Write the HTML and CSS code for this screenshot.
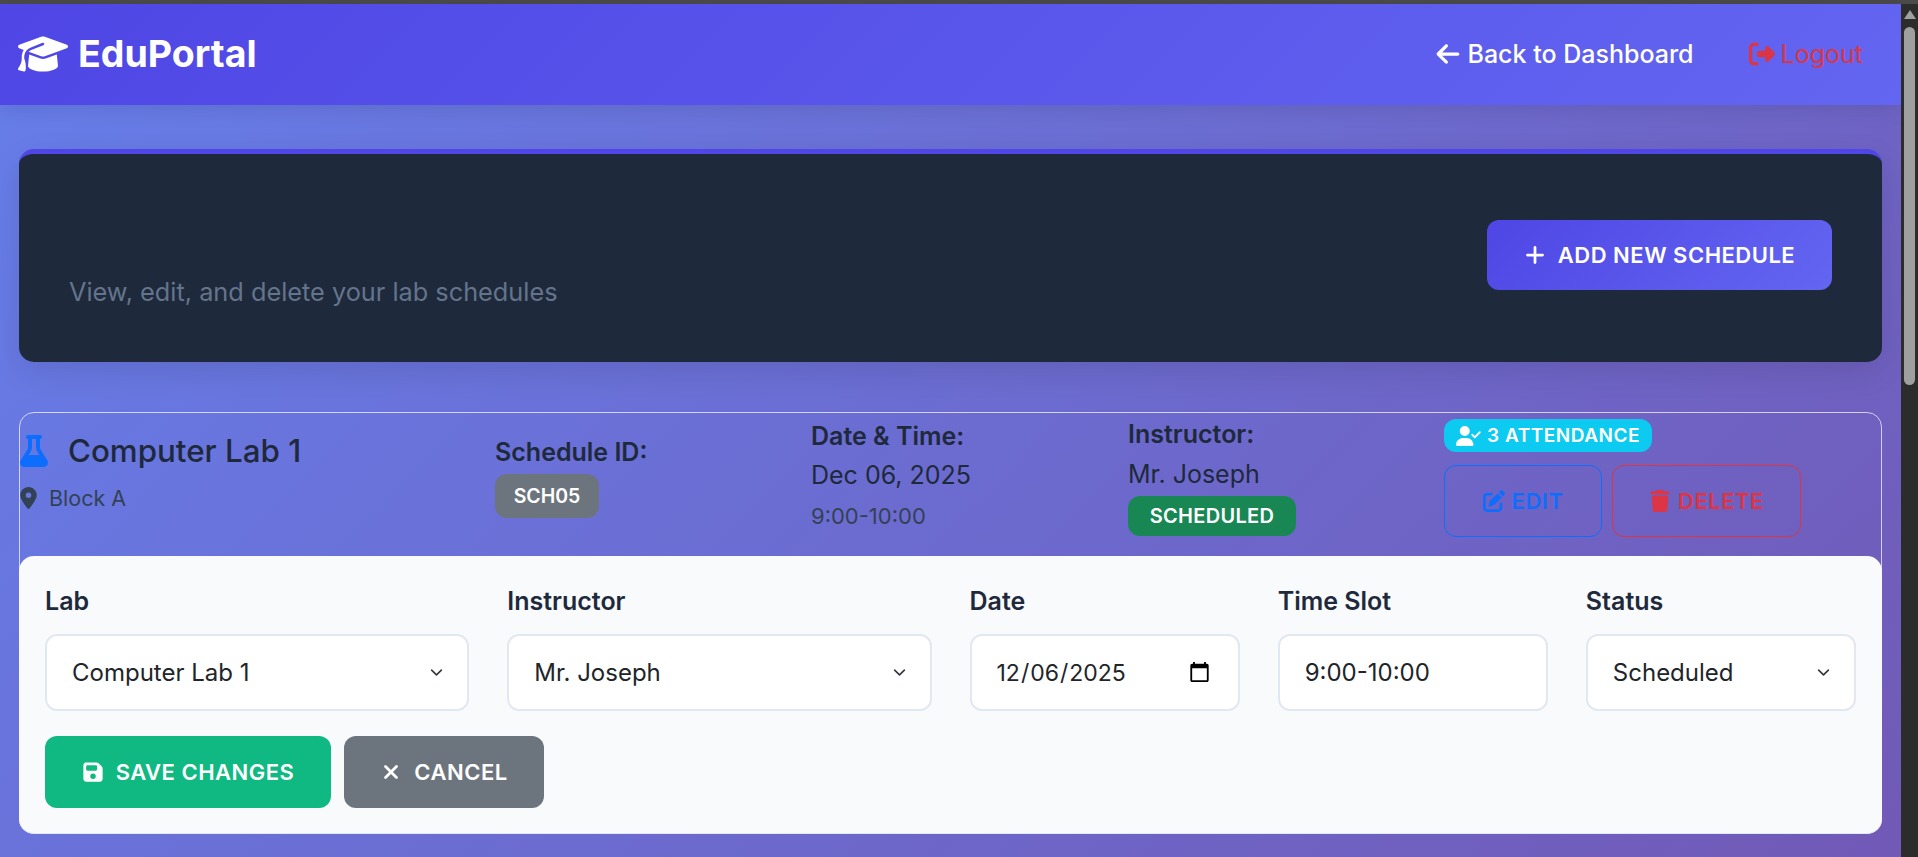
FILE: index.html
```html
<!DOCTYPE html>
<html lang="en">
<head>
    <meta charset="UTF-8">
    <meta name="viewport" content="width=device-width, initial-scale=1.0">
    <title>Lab Schedules</title>
    <link rel="stylesheet" href="styles.css">
</head>
<body>
    <div class="top-strip"></div>
    <div class="window">
        <div class="page">
            <nav class="navbar">
                <a class="brand" href="#">
                    <svg class="brand-icon" viewBox="0 0 640 512"><path d="M320 32c-8.1 0-16.1 1.4-23.7 4.1L15.8 137.4C6.3 140.9 0 149.9 0 160s6.3 19.1 15.8 22.6l57.9 20.9C57.3 229.3 48 259.8 48 291.9v28.1c0 28.4-10.8 57.7-22.3 80.8c-6.5 13-13.9 25.8-22.5 37.6C0 442.7-.9 448.3 .9 453.4s6 8.9 11.2 10.2l64 16c4.2 1.1 8.7 .3 12.4-2s6.3-6.1 7.1-10.4c8.6-42.8 4.3-81.2-2.1-108.7C90.3 344.3 86 329.8 80 316.5V291.9c0-30.2 10.2-58.7 27.9-81.5c12.9-15.5 29.6-28 49.2-35.7l157-61.7c8.2-3.2 17.5 .8 20.7 9s-.8 17.5-9 20.7l-157 61.7c-12.4 4.9-23.3 12.4-32.2 21.6l159.6 57.6c7.6 2.7 15.6 4.1 23.7 4.1s16.1-1.4 23.7-4.1L624.2 182.6c9.5-3.4 15.8-12.5 15.8-22.6s-6.3-19.1-15.8-22.6L343.7 36.1C336.1 33.4 328.1 32 320 32zM128 408c0 35.3 86 72 192 72s192-36.7 192-72L496.7 262.6 354.5 314c-11.1 4-22.8 6-34.5 6s-23.5-2-34.5-6L143.3 262.6 128 408z"/></svg>
                    EduPortal
                </a>
                <div class="nav-links">
                    <a class="nav-link" href="#">
                        <svg class="nav-icon" viewBox="0 0 448 512"><path d="M9.4 233.4c-12.5 12.5-12.5 32.8 0 45.3l160 160c12.5 12.5 32.8 12.5 45.3 0s12.5-32.8 0-45.3L109.2 288 416 288c17.7 0 32-14.3 32-32s-14.3-32-32-32l-306.7 0L214.6 118.6c12.5-12.5 12.5-32.8 0-45.3s-32.8-12.5-45.3 0l-160 160z"/></svg>
                        Back to Dashboard
                    </a>
                    <a class="nav-link logout" href="#">
                        <svg class="nav-icon" viewBox="0 0 512 512"><path d="M377.9 105.9L500.7 228.7c7.2 7.2 11.3 17.1 11.3 27.3s-4.1 20.1-11.3 27.3L377.9 406.1c-6.4 6.4-15 9.9-24 9.9c-18.7 0-33.9-15.2-33.9-33.9l0-62.1-128 0c-17.7 0-32-14.3-32-32l0-64c0-17.7 14.3-32 32-32l128 0 0-62.1c0-18.7 15.2-33.9 33.9-33.9c9 0 17.6 3.6 24 9.9zM160 96L96 96c-17.7 0-32 14.3-32 32l0 256c0 17.7 14.3 32 32 32l64 0c17.7 0 32 14.3 32 32s-14.3 32-32 32l-64 0c-53 0-96-43-96-96L0 128C0 75 43 32 96 32l64 0c17.7 0 32 14.3 32 32s-14.3 32-32 32z"/></svg>
                        Logout
                    </a>
                </div>
            </nav>

            <main class="content">
                <section class="hero">
                    <p class="hero-text">View, edit, and delete your lab schedules</p>
                    <button class="btn btn-add" type="button">
                        <svg class="btn-icon" viewBox="0 0 448 512"><path d="M256 80c0-17.7-14.3-32-32-32s-32 14.3-32 32V224H48c-17.7 0-32 14.3-32 32s14.3 32 32 32H192V432c0 17.7 14.3 32 32 32s32-14.3 32-32V288H400c17.7 0 32-14.3 32-32s-14.3-32-32-32H256V80z"/></svg>
                        Add New Schedule
                    </button>
                </section>

                <section class="schedule-item">
                    <div class="schedule-row">
                        <div class="col-lab">
                            <h3 class="lab-name">
                                <svg class="flask" viewBox="0 0 448 512"><path d="M288 0H160 128C110.3 0 96 14.3 96 32s14.3 32 32 32V196.8c0 11.8-3.3 23.5-9.5 33.5L10.3 406.2C3.6 417.2 0 429.7 0 442.6C0 480.9 31.1 512 69.4 512H378.6c38.3 0 69.4-31.1 69.4-69.4c0-12.8-3.6-25.4-10.3-36.4L329.5 230.4c-6.2-10.1-9.5-21.7-9.5-33.5V64c17.7 0 32-14.3 32-32s-14.3-32-32-32H288zM192 196.8V64h64V196.8c0 23.7 6.6 46.9 19 67.1L309.5 320h-171L173 263.9c12.4-20.2 19-43.4 19-67.1z"/></svg>
                                Computer Lab 1
                            </h3>
                            <p class="lab-block">
                                <svg class="marker" viewBox="0 0 384 512"><path d="M215.7 499.2C267 435 384 279.4 384 192C384 86 298 0 192 0S0 86 0 192c0 87.4 117 243 168.3 307.2c12.3 15.3 35.1 15.3 47.4 0zM192 256a64 64 0 1 1 0-128 64 64 0 1 1 0 128z"/></svg>
                                Block A
                            </p>
                        </div>
                        <div class="col-id">
                            <strong class="field-label">Schedule ID:</strong>
                            <span class="badge badge-id">SCH05</span>
                        </div>
                        <div class="col-date">
                            <strong class="field-label">Date &amp; Time:</strong>
                            <span class="field-value">Dec 06, 2025</span>
                            <small class="field-small">9:00-10:00</small>
                        </div>
                        <div class="col-instructor">
                            <strong class="field-label">Instructor:</strong>
                            <span class="field-value">Mr. Joseph</span>
                            <span class="badge badge-status">SCHEDULED</span>
                        </div>
                        <div class="col-actions">
                            <span class="badge badge-attendance">
                                <svg class="attendance-icon" viewBox="0 0 640 512"><path d="M96 128a128 128 0 1 1 256 0A128 128 0 1 1 96 128zM0 482.3C0 383.8 79.8 304 178.3 304h91.4C368.2 304 448 383.8 448 482.3c0 16.4-13.3 29.7-29.7 29.7H29.7C13.3 512 0 498.7 0 482.3zM625 177L497 305c-9.4 9.4-24.6 9.4-33.9 0l-64-64c-9.4-9.4-9.4-24.6 0-33.9s24.6-9.4 33.9 0l47 47L591 143c9.4-9.4 24.6-9.4 33.9 0s9.4 24.6 0 33.9z"/></svg>
                                3 Attendance
                            </span>
                            <div class="action-btns">
                                <button class="btn btn-edit" type="button">
                                    <svg class="btn-icon" viewBox="0 0 512 512"><path d="M471.6 21.7c-21.9-21.9-57.3-21.9-79.2 0L362.3 51.7l97.9 97.9 30.1-30.1c21.9-21.9 21.9-57.3 0-79.2L471.6 21.7zm-299.2 220c-6.1 6.1-10.8 13.6-13.5 21.9l-29.6 88.8c-2.9 8.6-.6 18.1 5.8 24.6s15.9 8.7 24.6 5.8l88.8-29.6c8.2-2.7 15.7-7.4 21.9-13.5L437.7 172.3 339.7 74.3 172.4 241.7zM96 64C43 64 0 107 0 160V416c0 53 43 96 96 96H352c53 0 96-43 96-96V320c0-17.7-14.3-32-32-32s-32 14.3-32 32v96c0 17.7-14.3 32-32 32H96c-17.7 0-32-14.3-32-32V160c0-17.7 14.3-32 32-32h96c17.7 0 32-14.3 32-32s-14.3-32-32-32H96z"/></svg>
                                    Edit
                                </button>
                                <button class="btn btn-delete" type="button">
                                    <svg class="btn-icon" viewBox="0 0 448 512"><path d="M135.2 17.7L128 32H32C14.3 32 0 46.3 0 64S14.3 96 32 96H416c17.7 0 32-14.3 32-32s-14.3-32-32-32H320l-7.2-14.3C307.4 6.8 296.3 0 284.2 0H163.8c-12.1 0-23.2 6.8-28.6 17.7zM416 128H32L53.2 467c1.6 25.3 22.6 45 47.9 45H346.9c25.3 0 46.3-19.7 47.9-45L416 128z"/></svg>
                                    Delete
                                </button>
                            </div>
                        </div>
                    </div>

                    <form class="edit-form">
                        <div class="form-grid">
                            <div class="field span-3">
                                <label for="lab">Lab</label>
                                <select id="lab" class="control select">
                                    <option>Computer Lab 1</option>
                                </select>
                            </div>
                            <div class="field span-3">
                                <label for="instructor">Instructor</label>
                                <select id="instructor" class="control select">
                                    <option>Mr. Joseph</option>
                                </select>
                            </div>
                            <div class="field span-2">
                                <label for="date">Date</label>
                                <input id="date" class="control control-date" type="date" value="2025-12-06">
                            </div>
                            <div class="field span-2">
                                <label for="slot">Time Slot</label>
                                <input id="slot" class="control" type="text" value="9:00-10:00">
                            </div>
                            <div class="field span-2">
                                <label for="status">Status</label>
                                <select id="status" class="control select">
                                    <option>Scheduled</option>
                                </select>
                            </div>
                        </div>
                        <div class="form-btns">
                            <button class="btn btn-save" type="button">
                                <svg class="btn-icon" viewBox="0 0 448 512"><path d="M64 32C28.7 32 0 60.7 0 96V416c0 35.3 28.7 64 64 64H384c35.3 0 64-28.7 64-64V173.3c0-17-6.7-33.3-18.7-45.3L352 50.7C340 38.7 323.7 32 306.7 32H64zm0 96c0-17.7 14.3-32 32-32H288c17.7 0 32 14.3 32 32v64c0 17.7-14.3 32-32 32H96c-17.7 0-32-14.3-32-32V128zM224 288a64 64 0 1 1 0 128 64 64 0 1 1 0-128z"/></svg>
                                Save Changes
                            </button>
                            <button class="btn btn-cancel" type="button">
                                <svg class="btn-icon" viewBox="0 0 384 512"><path d="M342.6 150.6c12.5-12.5 12.5-32.8 0-45.3s-32.8-12.5-45.3 0L192 210.7 86.6 105.4c-12.5-12.5-32.8-12.5-45.3 0s-12.5 32.8 0 45.3L146.7 256 41.4 361.4c-12.5 12.5-12.5 32.8 0 45.3s32.8 12.5 45.3 0L192 301.3 297.4 406.6c12.5 12.5 32.8 12.5 45.3 0s12.5-32.8 0-45.3L237.3 256 342.6 150.6z"/></svg>
                                Cancel
                            </button>
                        </div>
                    </form>
                </section>
            </main>
        </div>

        <div class="scrollbar">
            <span class="scroll-arrow"></span>
            <span class="scroll-thumb"></span>
        </div>
    </div>
</body>
</html>
```

FILE: styles.css
```css
* {
    box-sizing: border-box;
}
html, body {
    height: 100%;
    margin: 0;
    overflow: hidden;
}
body {
    display: flex;
    flex-direction: column;
    font-family: Inter, "Noto Sans", sans-serif;
    color: #1e293b;
    background: #2c2c2c;
}
a {
    text-decoration: none;
    color: inherit;
}
svg {
    fill: currentColor;
    flex: none;
}

.top-strip {
    height: 4px;
    background: #4b4b4b;
}
.window {
    flex: 1;
    display: flex;
    min-height: 0;
}
.page {
    flex: 1;
    min-width: 0;
    background: linear-gradient(135deg, #667eea 0%, #764ba2 100%) no-repeat;
    background-size: 100% 1950px;
}

/* scrollbar of the window */
.scrollbar {
    width: 17px;
    background: #2c2c2c;
    display: flex;
    flex-direction: column;
    align-items: center;
    padding-top: 6px;
}
.scroll-arrow {
    width: 0;
    height: 0;
    border-left: 6px solid transparent;
    border-right: 6px solid transparent;
    border-bottom: 9px solid #a0a0a0;
}
.scroll-thumb {
    width: 11px;
    height: 358px;
    margin-top: 8px;
    border-radius: 6px;
    background: #9f9f9f;
}

/* navbar */
.navbar {
    height: 101px;
    display: flex;
    align-items: center;
    justify-content: space-between;
    padding: 0 38px 2px 18px;
    background: linear-gradient(135deg, #4f46e5, #6366f1);
    color: #fff;
    box-shadow: 0 4px 20px rgba(0, 0, 0, 0.1);
}
.brand {
    display: flex;
    align-items: center;
    gap: 10px;
    font-size: 37.5px;
    font-weight: 700;
}
.brand-icon {
    width: 50px;
    height: 40px;
}
.nav-links {
    display: flex;
    gap: 55px;
}
.nav-link {
    display: flex;
    align-items: center;
    gap: 6px;
    font-size: 25px;
    font-weight: 500;
}
.nav-icon {
    width: 26px;
    height: 26px;
}
.logout {
    color: #dc3545;
    font-weight: 400;
}

/* main area */
.content {
    padding: 44px 19px 0 19px;
}
.hero {
    height: 213px;
    display: flex;
    align-items: center;
    justify-content: space-between;
    padding: 0 50px;
    background: #1e293b;
    border-top: 5px solid #4f46e5;
    border-radius: 15px;
    box-shadow: 0 10px 30px rgba(0, 0, 0, 0.1);
}
.hero-text {
    margin: 67px 0 0;
    font-size: 25.3px;
    color: #64748b;
}

.btn {
    display: inline-flex;
    align-items: center;
    justify-content: center;
    gap: 12px;
    border: 0;
    border-radius: 12px;
    font-family: inherit;
    font-size: 22px;
    font-weight: 600;
    letter-spacing: 0.5px;
    text-transform: uppercase;
    color: #fff;
    cursor: pointer;
}
.btn-icon {
    width: 22px;
    height: 22px;
}
.btn-add {
    width: 345px;
    height: 70px;
    margin-bottom: 7px;
    background: linear-gradient(135deg, #4f46e5, #6366f1);
}

/* schedule */
.schedule-item {
    margin-top: 50px;
    border: 1px solid rgba(255, 255, 255, 0.7);
    border-radius: 15px;
}
.schedule-row {
    height: 143px;
    display: grid;
    grid-template-columns: 475px 316px 317px 316px 1fr;
    align-items: start;
}
.col-lab {
    padding-top: 19px;
}
.col-id {
    padding-top: 24px;
}
.col-date {
    padding-top: 8px;
}
.col-instructor,
.col-actions {
    padding-top: 6px;
}
.lab-name {
    display: flex;
    align-items: center;
    gap: 20px;
    margin: 0;
    font-size: 31.3px;
    font-weight: 500;
}
.flask {
    width: 28px;
    height: 32px;
    color: #0d6efd;
}
.lab-block {
    display: flex;
    align-items: center;
    gap: 12px;
    margin: 15px 0 0;
    font-size: 21.5px;
    color: #334155;
}
.marker {
    width: 17px;
    height: 22px;
}
.field-label {
    display: block;
    font-size: 25px;
    line-height: 30px;
    font-weight: 600;
}
.field-value {
    display: block;
    margin-top: 9px;
    font-size: 25px;
    line-height: 30px;
}
.col-instructor .field-value {
    margin-top: 10px;
}
.field-small {
    display: block;
    margin-top: 13px;
    font-size: 22px;
    line-height: 27px;
    color: #334155;
}
.badge {
    display: flex;
    align-items: center;
    justify-content: center;
    border-radius: 12px;
    font-weight: 600;
    color: #fff;
}
.badge-id {
    width: 104px;
    height: 44px;
    margin-top: 7px;
    font-size: 19.5px;
    background: #6c757d;
}
.badge-status {
    width: 168px;
    height: 40px;
    margin-top: 7px;
    font-size: 20px;
    letter-spacing: 0.3px;
    background: #198754;
}
.badge-attendance {
    width: 208px;
    height: 33px;
    gap: 6px;
    font-size: 19px;
    letter-spacing: 0.5px;
    text-transform: uppercase;
    background: #0dcaf0;
}
.attendance-icon {
    width: 25px;
    height: 20px;
}
.action-btns {
    display: flex;
    gap: 10px;
    margin-top: 13px;
}
.btn-edit,
.btn-delete {
    height: 72px;
    gap: 7px;
    background: transparent;
    border: 1px solid;
}
.btn-edit {
    width: 158px;
    color: #0d6efd;
}
.btn-delete {
    width: 189px;
    color: #dc3545;
}

/* inline edit form */
.edit-form {
    height: 278px;
    margin: 0 -1px -1px;
    padding: 26px 26px 0;
    background: #f8fafc;
    border-bottom: 1px solid #e2e8f0;
    border-radius: 15px;
}
.form-grid {
    display: grid;
    grid-template-columns: repeat(12, 1fr);
    column-gap: 38px;
}
.span-3 {
    grid-column: span 3;
}
.span-2 {
    grid-column: span 2;
}
.field label {
    display: block;
    margin-bottom: 14px;
    font-size: 25px;
    font-weight: 600;
    line-height: 38px;
}
.control {
    display: block;
    width: 100%;
    height: 77px;
    padding: 0 25px;
    border: 2px solid #e2e8f0;
    border-radius: 12px;
    background-color: #fff;
    font-family: inherit;
    font-size: 24px;
    color: #212529;
    outline: none;
}
.control-date {
    padding-left: 24px;
    font-size: 23px;
}
.select {
    appearance: none;
    background-image: url("data:image/svg+xml,%3Csvg xmlns='http://www.w3.org/2000/svg' viewBox='0 0 16 16'%3E%3Cpath fill='none' stroke='%23343a40' stroke-linecap='round' stroke-linejoin='round' stroke-width='2' d='M2 5l6 6 6-6'/%3E%3C/svg%3E");
    background-repeat: no-repeat;
    background-position: right 23px center;
    background-size: 15px 13px;
}
.form-btns {
    display: flex;
    gap: 13px;
    margin-top: 25px;
}
.btn-save,
.btn-cancel {
    height: 72px;
}
.btn-save {
    width: 286px;
    background: #10b981;
}
.btn-cancel {
    width: 200px;
    background: #6c757d;
}
```
